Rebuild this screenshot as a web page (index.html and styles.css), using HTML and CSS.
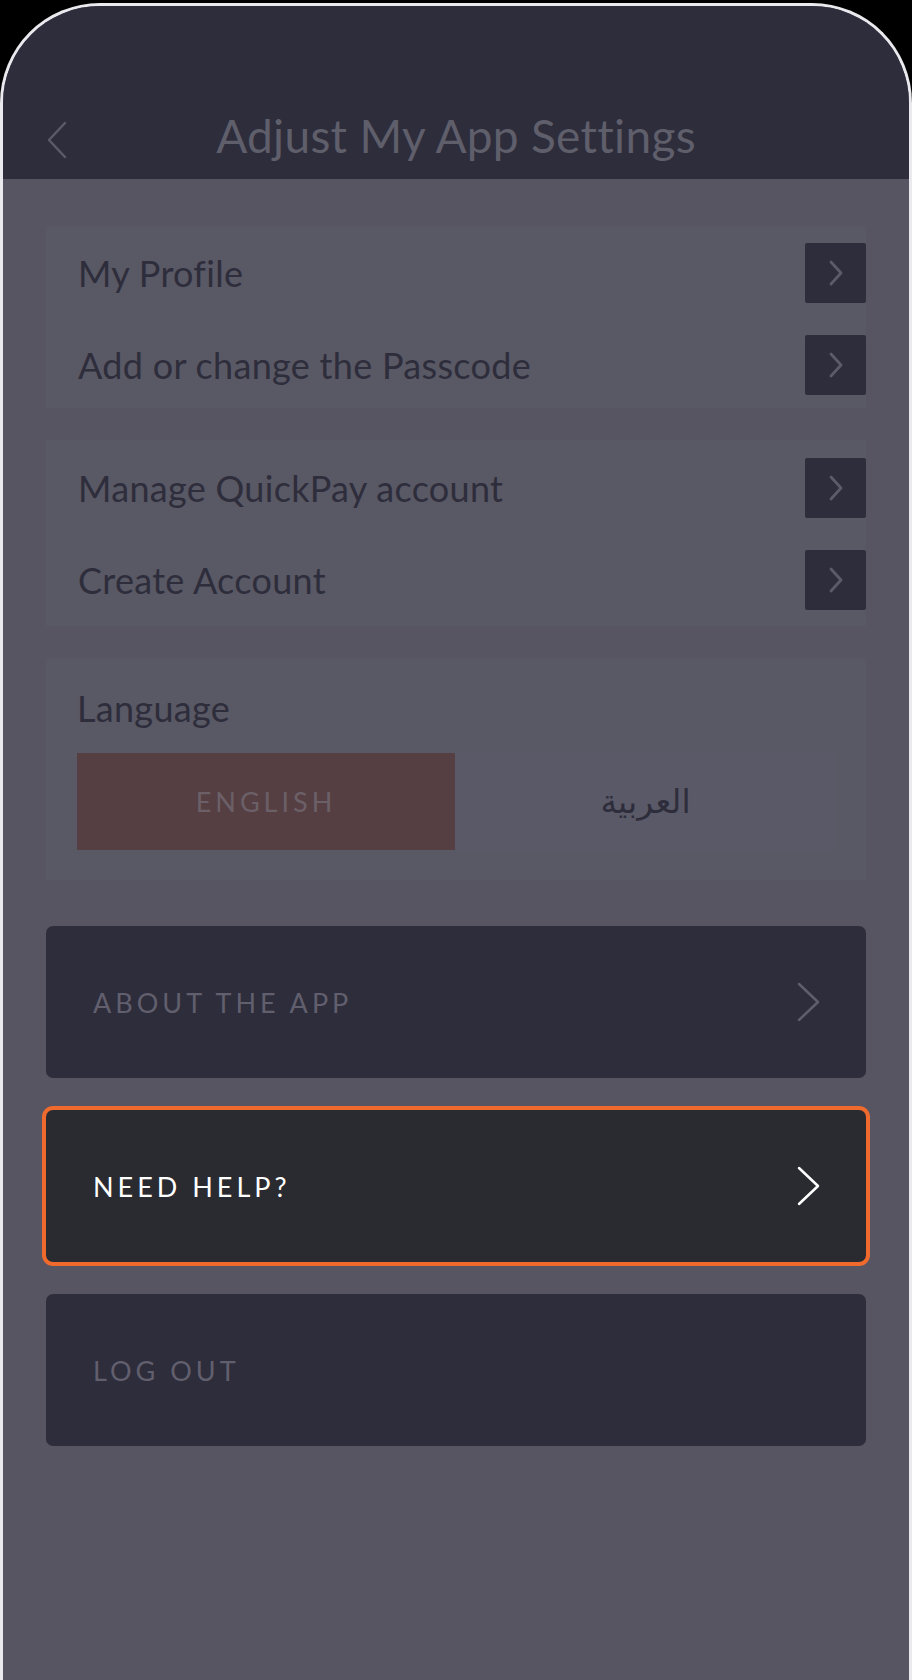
FILE: index.html
```html
<!DOCTYPE html>
<html lang="en">
<head>
    <meta charset="UTF-8">
    <meta name="viewport" content="width=device-width, initial-scale=1.0">
    <title>Adjust My App Settings</title>
    <link rel="stylesheet" href="styles.css">
</head>
<body>
    <div class="phone">
        <header class="topBar">
            <button class="backButton" aria-label="Back">
                <svg width="22" height="38" viewBox="0 0 22 38"><path d="M19 2 L3 19 L19 36" fill="none" stroke="#5b5a68" stroke-width="2.5" stroke-linecap="round" stroke-linejoin="round"/></svg>
            </button>
            <h1 class="pageTitle">Adjust My App Settings</h1>
            <span></span>
        </header>

        <main class="content">
            <section class="card">
                <div class="row">
                    <span>My Profile</span>
                    <span class="goBox"><svg width="16" height="28" viewBox="0 0 16 28"><path d="M3 3 L13 14 L3 25" fill="none" stroke="#5c5b69" stroke-width="2.8" stroke-linecap="round" stroke-linejoin="round"/></svg></span>
                </div>
                <div class="row">
                    <span>Add or change the Passcode</span>
                    <span class="goBox"><svg width="16" height="28" viewBox="0 0 16 28"><path d="M3 3 L13 14 L3 25" fill="none" stroke="#5c5b69" stroke-width="2.8" stroke-linecap="round" stroke-linejoin="round"/></svg></span>
                </div>
            </section>

            <section class="card accountCard">
                <div class="row">
                    <span>Manage QuickPay account</span>
                    <span class="goBox"><svg width="16" height="28" viewBox="0 0 16 28"><path d="M3 3 L13 14 L3 25" fill="none" stroke="#5c5b69" stroke-width="2.8" stroke-linecap="round" stroke-linejoin="round"/></svg></span>
                </div>
                <div class="row">
                    <span>Create Account</span>
                    <span class="goBox"><svg width="16" height="28" viewBox="0 0 16 28"><path d="M3 3 L13 14 L3 25" fill="none" stroke="#5c5b69" stroke-width="2.8" stroke-linecap="round" stroke-linejoin="round"/></svg></span>
                </div>
            </section>

            <section class="card languageCard">
                <div class="languageLabel">Language</div>
                <div class="languageToggle">
                    <button class="langOption active">ENGLISH</button>
                    <button class="langOption arabic" lang="ar">العربية</button>
                </div>
            </section>

            <div class="actions">
                <button class="actionButton">
                    <span>ABOUT THE APP</span>
                    <svg width="26" height="40" viewBox="0 0 26 40"><path d="M3 2 L22 20 L3 38" fill="none" stroke="#5f5e6c" stroke-width="2.5" stroke-linecap="round" stroke-linejoin="round"/></svg>
                </button>
                <button class="actionButton highlighted">
                    <span>NEED HELP?</span>
                    <svg width="26" height="40" viewBox="0 0 26 40"><path d="M3 2 L22 20 L3 38" fill="none" stroke="#ffffff" stroke-width="2.5" stroke-linecap="round" stroke-linejoin="round"/></svg>
                </button>
                <button class="actionButton">
                    <span>LOG OUT</span>
                </button>
            </div>
        </main>
    </div>
</body>
</html>
```
FILE: styles.css
```css
body {
    margin: 0;
    background-color: #000;
    font-family: Lato, "Open Sans", sans-serif;
}

.phone {
    box-sizing: border-box;
    width: 912px;
    height: 1677px;
    margin-top: 3px;
    border: 3px solid #e9e9ee;
    border-bottom: none;
    border-radius: 100px 100px 0 0;
    overflow: hidden;
    background-color: #565561;
}

.topBar {
    box-sizing: border-box;
    height: 173px;
    background-color: #2e2d3b;
    display: grid;
    grid-template-columns: 1fr auto 1fr;
    align-items: end;
    padding: 0 43px 16px 43px;
}

.backButton {
    justify-self: start;
    background: none;
    border: none;
    padding: 0;
    margin-bottom: 4px;
    display: flex;
}

.pageTitle {
    margin: 0;
    font-weight: 400;
    font-size: 46px;
    line-height: 54px;
    letter-spacing: 0.3px;
    color: #5f5e6b;
}

.content {
    padding: 47px 43px 0 43px;
    display: flex;
    flex-direction: column;
    gap: 32px;
}

.card {
    background-color: #595865;
    padding: 17px 0 13px 32px;
    display: flex;
    flex-direction: column;
    gap: 32px;
}

.accountCard {
    padding-top: 18px;
    padding-bottom: 16px;
}

.row {
    display: flex;
    justify-content: space-between;
    align-items: center;
    height: 60px;
    font-size: 36px;
    letter-spacing: 0.3px;
    color: #2e2d3b;
}

.goBox {
    width: 61px;
    height: 60px;
    background-color: #2e2d3b;
    border-radius: 2px;
    display: flex;
    align-items: center;
    justify-content: center;
}

.languageCard {
    padding: 29px 30px 30px 31px;
    gap: 24px;
}

.languageLabel {
    font-size: 36px;
    line-height: 42px;
    letter-spacing: 0.3px;
    color: #2e2d3b;
}

.languageToggle {
    display: grid;
    grid-template-columns: 378px 1fr;
    height: 97px;
    background-color: #5a5967;
}

.langOption {
    border: none;
    background: none;
    font-family: Lato, "Open Sans", sans-serif;
    color: #2e2d3b;
}

.langOption.active {
    background-color: #553f42;
    color: #6b6068;
    font-size: 27px;
    letter-spacing: 4px;
}

.langOption.arabic {
    font-family: "DejaVu Sans", "Noto Sans", sans-serif;
    font-size: 33px;
}

.actions {
    display: flex;
    flex-direction: column;
    gap: 32px;
    margin-top: 14px;
}

.actionButton {
    box-sizing: border-box;
    height: 152px;
    display: flex;
    align-items: center;
    justify-content: space-between;
    padding: 0 44px 0 47px;
    border: none;
    border-radius: 7px;
    background-color: #2e2d3b;
    color: #615f6e;
    font-family: Lato, "Open Sans", sans-serif;
    font-size: 27px;
    letter-spacing: 4px;
    text-align: left;
}

.actionButton.highlighted {
    background-color: #2a2b30;
    color: #fff;
    box-shadow: 0 0 0 4px #f06a2e;
}
```
